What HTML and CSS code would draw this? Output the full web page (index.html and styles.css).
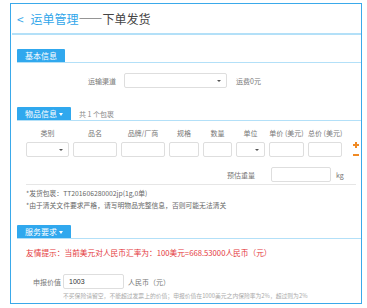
FILE: index.html
```html
<!DOCTYPE html>
<html lang="zh-CN">
<head>
    <meta charset="UTF-8">
    <meta name="viewport" content="width=device-width, initial-scale=1.0">
    <title>运单管理——下单发货</title>
    <link rel="stylesheet" href="styles.css">
</head>
<body>
    <div class="page">
        <div class="page-head">
            <span class="back">&lt;</span>
            <span class="crumb">运单管理</span><span class="sub">——下单发货</span>
        </div>

        <div class="page-body">
            <!-- 基本信息 -->
            <div class="section-head first">
                <div class="tab">基本信息</div>
            </div>
            <div class="channel-row">
                <label class="channel-label">运输渠道</label>
                <div class="box select channel-select"></div>
                <span class="fee">运费0元</span>
            </div>

            <!-- 物品信息 -->
            <div class="section-head goods-head">
                <div class="tab">物品信息<i class="caret"></i></div>
                <span class="count">共 1 个包裹</span>
            </div>
            <div class="goods">
                <div class="goods-grid">
                    <span>类别</span>
                    <span>品名</span>
                    <span>品牌/厂商</span>
                    <span>规格</span>
                    <span>数量</span>
                    <span>单位</span>
                    <span>单价 (美元)</span>
                    <span>总价 (美元)</span>
                    <span></span>

                    <div class="box select"></div>
                    <div class="box"></div>
                    <div class="box"></div>
                    <div class="box"></div>
                    <div class="box"></div>
                    <div class="box select"></div>
                    <div class="box"></div>
                    <div class="box"></div>
                    <div class="ops">
                        <i class="plus"></i>
                        <i class="minus"></i>
                    </div>
                </div>
                <div class="weight-row">
                    <label class="weight-label">预估重量</label>
                    <div class="box weight-input"></div>
                    <span class="unit">kg</span>
                </div>
            </div>
            <div class="notes">
                <p>*发货包裹：TT201606280002jp(1g,0单)</p>
                <p>*由于清关文件要求严格，请写明物品完整信息，否则可能无法清关</p>
            </div>

            <!-- 服务要求 -->
            <div class="section-head service-head">
                <div class="tab">服务要求<i class="caret"></i></div>
            </div>
            <p class="rate">友情提示：当前美元对人民币汇率为：100美元=668.53000人民币（元）</p>
            <div class="declare-row">
                <label class="declare-label">申报价值</label>
                <div class="box declare-input">1003</div>
                <span class="currency">人民币（元）</span>
            </div>
            <p class="hint">不买保险请留空，不能超过发票上的价值；申报价值在1000美元之内保险率为2%，超过则为2%</p>
        </div>
    </div>
</body>
</html>
```

FILE: styles.css
```css
body {
    margin: 0;
    padding: 0;
    background: #fff;
    font-family: "Liberation Sans", "Noto Sans CJK SC", sans-serif;
    color: #555;
}
p {
    margin: 0;
}
.page {
    margin: 3px 0 0 10px;
    width: 350px;
    height: 299px;
    border: 1px solid #3aa9ea;
}
.page-head {
    margin-left: 1px;
    height: 29px;
    line-height: 29px;
    padding-left: 5px;
    border-bottom: 2px solid #b3e0f8;
    font-size: 12px;
    font-family: "Noto Sans CJK SC", sans-serif;
}
.page-head .back {
    color: #3aa9ea;
    margin-right: 4px;
}
.page-head .crumb {
    color: #2fa6ea;
}
.page-head .sub {
    color: #444;
}
.page-body {
    padding-left: 6px;
}

/* 分区标题 */
.section-head {
    display: flex;
    align-items: flex-end;
    border-bottom: 1px solid #b3e0f8;
}
.section-head.first {
    margin-top: 14px;
}
.goods-head {
    margin-top: 19px;
}
.service-head {
    margin-top: 14px;
}
.tab {
    height: 13px;
    line-height: 13px;
    padding: 0 8px;
    background: #30a8ee;
    color: #fff;
    font-size: 8px;
    font-family: "Noto Sans CJK SC", sans-serif;
    border-radius: 1px 1px 0 0;
}
.caret {
    display: inline-block;
    margin-left: 2px;
    vertical-align: 1px;
    border-left: 2.5px solid transparent;
    border-right: 2.5px solid transparent;
    border-top: 3px solid #fff;
}
.count {
    margin-left: 8px;
    font-size: 7px;
    line-height: 12px;
    color: #888;
    font-family: "Noto Sans CJK SC", sans-serif;
}

/* 输入框 */
.box {
    box-sizing: border-box;
    height: 15px;
    border: 1px solid #dedede;
    border-radius: 2px;
    background: #fff;
    position: relative;
}
.select::after {
    content: "";
    position: absolute;
    right: 5px;
    top: 6px;
    border-left: 2px solid transparent;
    border-right: 2px solid transparent;
    border-top: 2.5px solid #555;
}

.channel-row {
    display: flex;
    align-items: center;
    margin-top: 10px;
    padding-left: 9px;
    font-size: 7px;
    font-family: "Noto Sans CJK SC", sans-serif;
}
.channel-label {
    width: 90px;
    text-align: right;
    margin-right: 8px;
    color: #777;
}
.channel-select {
    width: 103px;
}
.fee {
    margin-left: 9px;
    color: #777;
}

/* 物品信息 */
.goods {
    padding-left: 9px;
    font-family: "Noto Sans CJK SC", sans-serif;
}
.goods-grid {
    display: grid;
    grid-template-columns: 43px 44px 44px 30px 29px 29px 35px 34px 14px;
    column-gap: 4px;
    row-gap: 4px;
    margin-top: 8px;
    font-size: 7px;
    color: #777;
}
.goods-grid > span {
    text-align: center;
    line-height: 9px;
    white-space: nowrap;
}
.ops {
    display: flex;
    flex-direction: column;
    align-items: flex-end;
    justify-content: center;
    gap: 4px;
    padding-right: 1px;
}
.plus,
.minus {
    display: block;
    width: 6px;
    height: 6px;
    position: relative;
}
.plus::before,
.plus::after,
.minus::before {
    content: "";
    position: absolute;
    background: #f08a24;
}
.plus::before,
.minus::before {
    left: 0;
    top: 2px;
    width: 6px;
    height: 1.5px;
}
.plus::after {
    left: 2.25px;
    top: 0;
    width: 1.5px;
    height: 6px;
}
.weight-row {
    display: flex;
    align-items: center;
    margin-top: 9px;
    font-size: 7px;
    color: #777;
}
.weight-label {
    width: 229px;
    text-align: right;
    margin-right: 16px;
}
.weight-input {
    width: 60px;
}
.unit {
    margin-left: 5px;
}
.notes {
    margin: 2px 5px 0 9px;
    padding-top: 2px;
    border-top: 1px solid #e6e6e6;
    font-size: 6.8px;
    line-height: 12px;
    color: #666;
    font-family: "Noto Sans CJK SC", sans-serif;
}

/* 服务要求 */
.rate {
    margin-top: 8px;
    padding-left: 9px;
    font-size: 7.7px;
    line-height: 12px;
    color: #e4393c;
    font-family: "Noto Sans CJK SC", sans-serif;
}
.declare-row {
    display: flex;
    align-items: center;
    margin-top: 15px;
    padding-left: 16px;
    font-size: 7px;
    color: #777;
    font-family: "Noto Sans CJK SC", sans-serif;
}
.declare-label {
    width: 30px;
}
.declare-input {
    width: 61px;
    padding-left: 5px;
    line-height: 13px;
    color: #333;
    font-family: "Liberation Sans", sans-serif;
}
.currency {
    margin-left: 4px;
}
.hint {
    margin-top: 2px;
    padding-left: 46px;
    font-size: 5.8px;
    line-height: 9px;
    color: #aaa;
    white-space: nowrap;
    font-family: "Noto Sans CJK SC", sans-serif;
}
```
